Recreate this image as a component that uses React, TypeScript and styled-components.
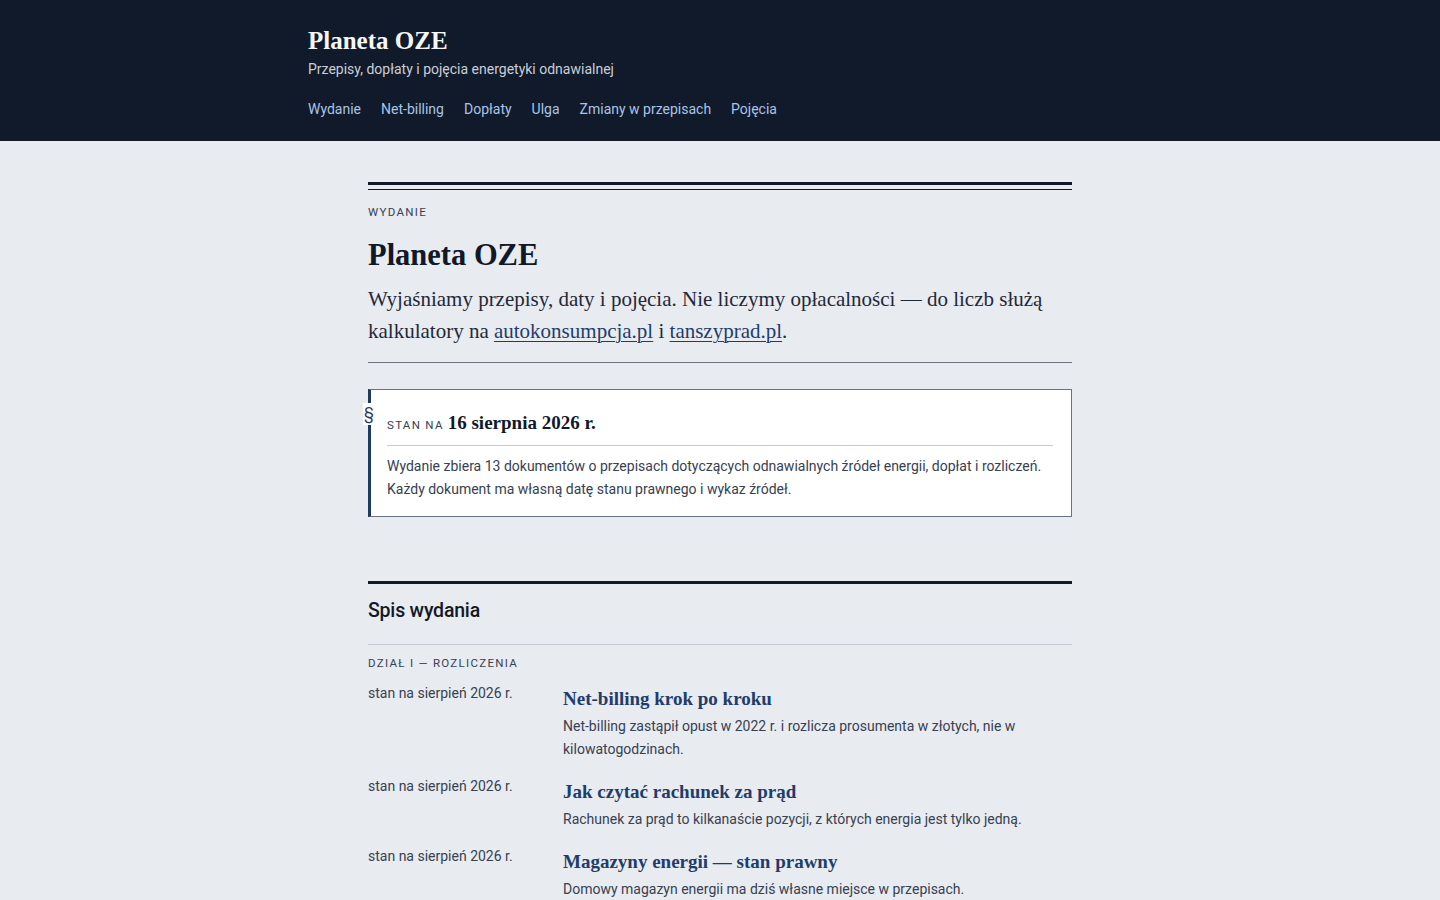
import React from "react";
import styled, { createGlobalStyle } from "styled-components";

const sans = `"Roboto", "Liberation Sans", sans-serif`;
const serif = `"Liberation Serif", "DejaVu Serif", serif`;

const Global = createGlobalStyle`
  html, body { margin: 0; padding: 0; }
  body {
    background: #e8ebf0;
    color: #111827;
    font-family: ${sans};
  }
`;

const entries = [
  {
    date: "stan na sierpień 2026 r.",
    title: "Net-billing krok po kroku",
    desc: "Net-billing zastąpił opust w 2022 r. i rozlicza prosumenta w złotych, nie w kilowatogodzinach.",
  },
  {
    date: "stan na sierpień 2026 r.",
    title: "Jak czytać rachunek za prąd",
    desc: "Rachunek za prąd to kilkanaście pozycji, z których energia jest tylko jedną.",
  },
  {
    date: "stan na sierpień 2026 r.",
    title: "Magazyny energii — stan prawny",
    desc: "Domowy magazyn energii ma dziś własne miejsce w przepisach.",
  },
];

const nav = ["Wydanie", "Net-billing", "Dopłaty", "Ulga", "Zmiany w przepisach", "Pojęcia"];

export default function App() {
  return (
    <>
      <Global />
      <Header>
        <HeaderInner>
          <Brand>Planeta OZE</Brand>
          <Tagline>Przepisy, dopłaty i pojęcia energetyki odnawialnej</Tagline>
          <Nav>
            {nav.map((n) => (
              <NavLink key={n} href="#">{n}</NavLink>
            ))}
          </Nav>
        </HeaderInner>
      </Header>
      <Main>
        <DoubleRule />
        <Kicker>Wydanie</Kicker>
        <Title>Planeta OZE</Title>
        <Lead>
          Wyjaśniamy przepisy, daty i pojęcia. Nie liczymy opłacalności — do liczb służą
          kalkulatory na <a href="#">autokonsumpcja.pl</a> i <a href="#">tanszyprad.pl</a>.
        </Lead>
        <ThinRule />
        <StatusBox>
          <Para>§</Para>
          <StatusHead>
            <Kicker as="span" $inline>Stan na</Kicker>
            <StatusDate>16 sierpnia 2026 r.</StatusDate>
          </StatusHead>
          <StatusText>
            Wydanie zbiera 13 dokumentów o przepisach dotyczących odnawialnych źródeł energii, dopłat i rozliczeń.
            Każdy dokument ma własną datę stanu prawnego i wykaz źródeł.
          </StatusText>
        </StatusBox>
        <Section>
          <SectionTitle>Spis wydania</SectionTitle>
          <Kicker $tight>Dział I — Rozliczenia</Kicker>
          <List>
            {entries.map((e) => (
              <Entry key={e.title}>
                <EntryDate>{e.date}</EntryDate>
                <div>
                  <EntryTitle href="#">{e.title}</EntryTitle>
                  <EntryDesc>{e.desc}</EntryDesc>
                </div>
              </Entry>
            ))}
          </List>
        </Section>
      </Main>
    </>
  );
}

const Header = styled.header`
  background: #111a2b;
  color: #f3f4f6;
`;
const HeaderInner = styled.div`
  width: 824px;
  margin: 0 auto;
  padding: 26px 0 22px;
`;
const Brand = styled.div`
  font-family: ${serif};
  font-size: 25px;
  font-weight: 700;
  line-height: 30px;
  color: #f5f6f8;
`;
const Tagline = styled.div`
  margin-top: 3px;
  font-size: 14px;
  line-height: 20px;
  color: #c9ced8;
`;
const Nav = styled.nav`
  display: flex;
  gap: 20px;
  margin-top: 20px;
`;
const NavLink = styled.a`
  font-size: 14px;
  line-height: 20px;
  color: #a9c4e6;
  text-decoration: none;
`;
const Main = styled.main`
  width: 704px;
  margin: 0 auto;
  padding: 41px 0 40px;
`;
const DoubleRule = styled.div`
  height: 4px;
  border-top: 3px solid #111a2b;
  border-bottom: 1px solid #111a2b;
`;
const Kicker = styled.div<{ $inline?: boolean; $tight?: boolean }>`
  font-size: 11.5px;
  letter-spacing: 1.3px;
  text-transform: uppercase;
  color: #374151;
  line-height: 16px;
  margin-top: ${(p) => (p.$inline ? "0" : p.$tight ? "10px" : "14px")};
`;
const Title = styled.h1`
  font-family: ${serif};
  font-size: 30.5px;
  font-weight: 700;
  line-height: 38px;
  margin: 16px 0 0;
  color: #111827;
`;
const Lead = styled.p`
  font-family: ${serif};
  font-size: 21px;
  line-height: 32px;
  margin: 9px 0 0;
  color: #1f2937;
  a {
    color: #1f3d6b;
    text-decoration: underline;
    text-underline-offset: 3px;
    text-decoration-thickness: 1px;
  }
`;
const ThinRule = styled.div`
  margin-top: 15px;
  border-top: 1px solid #6b7280;
`;
const StatusBox = styled.section`
  position: relative;
  margin-top: 26px;
  background: #ffffff;
  border: 1px solid #6b7280;
  border-left: 3px solid #1e3a5f;
  padding: 22px 18px 15px 16px;
`;
const Para = styled.span`
  position: absolute;
  left: -8px;
  top: 13px;
  width: 12px;
  background: #ffffff;
  color: #1e3a5f;
  font-size: 16px;
  line-height: 22px;
  text-align: center;
  font-family: ${sans};
`;
const StatusHead = styled.div`
  display: flex;
  align-items: baseline;
  gap: 4px;
  padding-bottom: 11px;
  border-bottom: 1px solid #c3cad6;
`;
const StatusDate = styled.span`
  font-family: ${serif};
  font-size: 19px;
  font-weight: 700;
  color: #111827;
`;
const StatusText = styled.p`
  margin: 9px 0 0;
  font-size: 14px;
  line-height: 23px;
  color: #374151;
`;
const Section = styled.section`
  margin-top: 64px;
  border-top: 3px solid #111a2b;
`;
const SectionTitle = styled.h2`
  font-size: 19.5px;
  font-weight: 500;
  line-height: 28px;
  margin: 0;
  padding: 13px 0 19px;
  border-bottom: 1px solid #c3cad6;
  color: #111827;
  letter-spacing: -0.2px;
`;
const List = styled.div`
  margin-top: 11px;
  display: flex;
  flex-direction: column;
  gap: 14px;
`;
const Entry = styled.div`
  display: grid;
  grid-template-columns: 195px 1fr;
`;
const EntryDate = styled.div`
  font-size: 14px;
  line-height: 22px;
  color: #374151;
`;
const EntryTitle = styled.a`
  display: block;
  margin-top: 2px;
  font-family: ${serif};
  font-size: 19px;
  font-weight: 700;
  line-height: 30px;
  color: #1f3d6b;
  text-decoration: none;
`;
const EntryDesc = styled.p`
  margin: 1px 0 0;
  font-size: 14px;
  line-height: 23px;
  color: #374151;
`;
